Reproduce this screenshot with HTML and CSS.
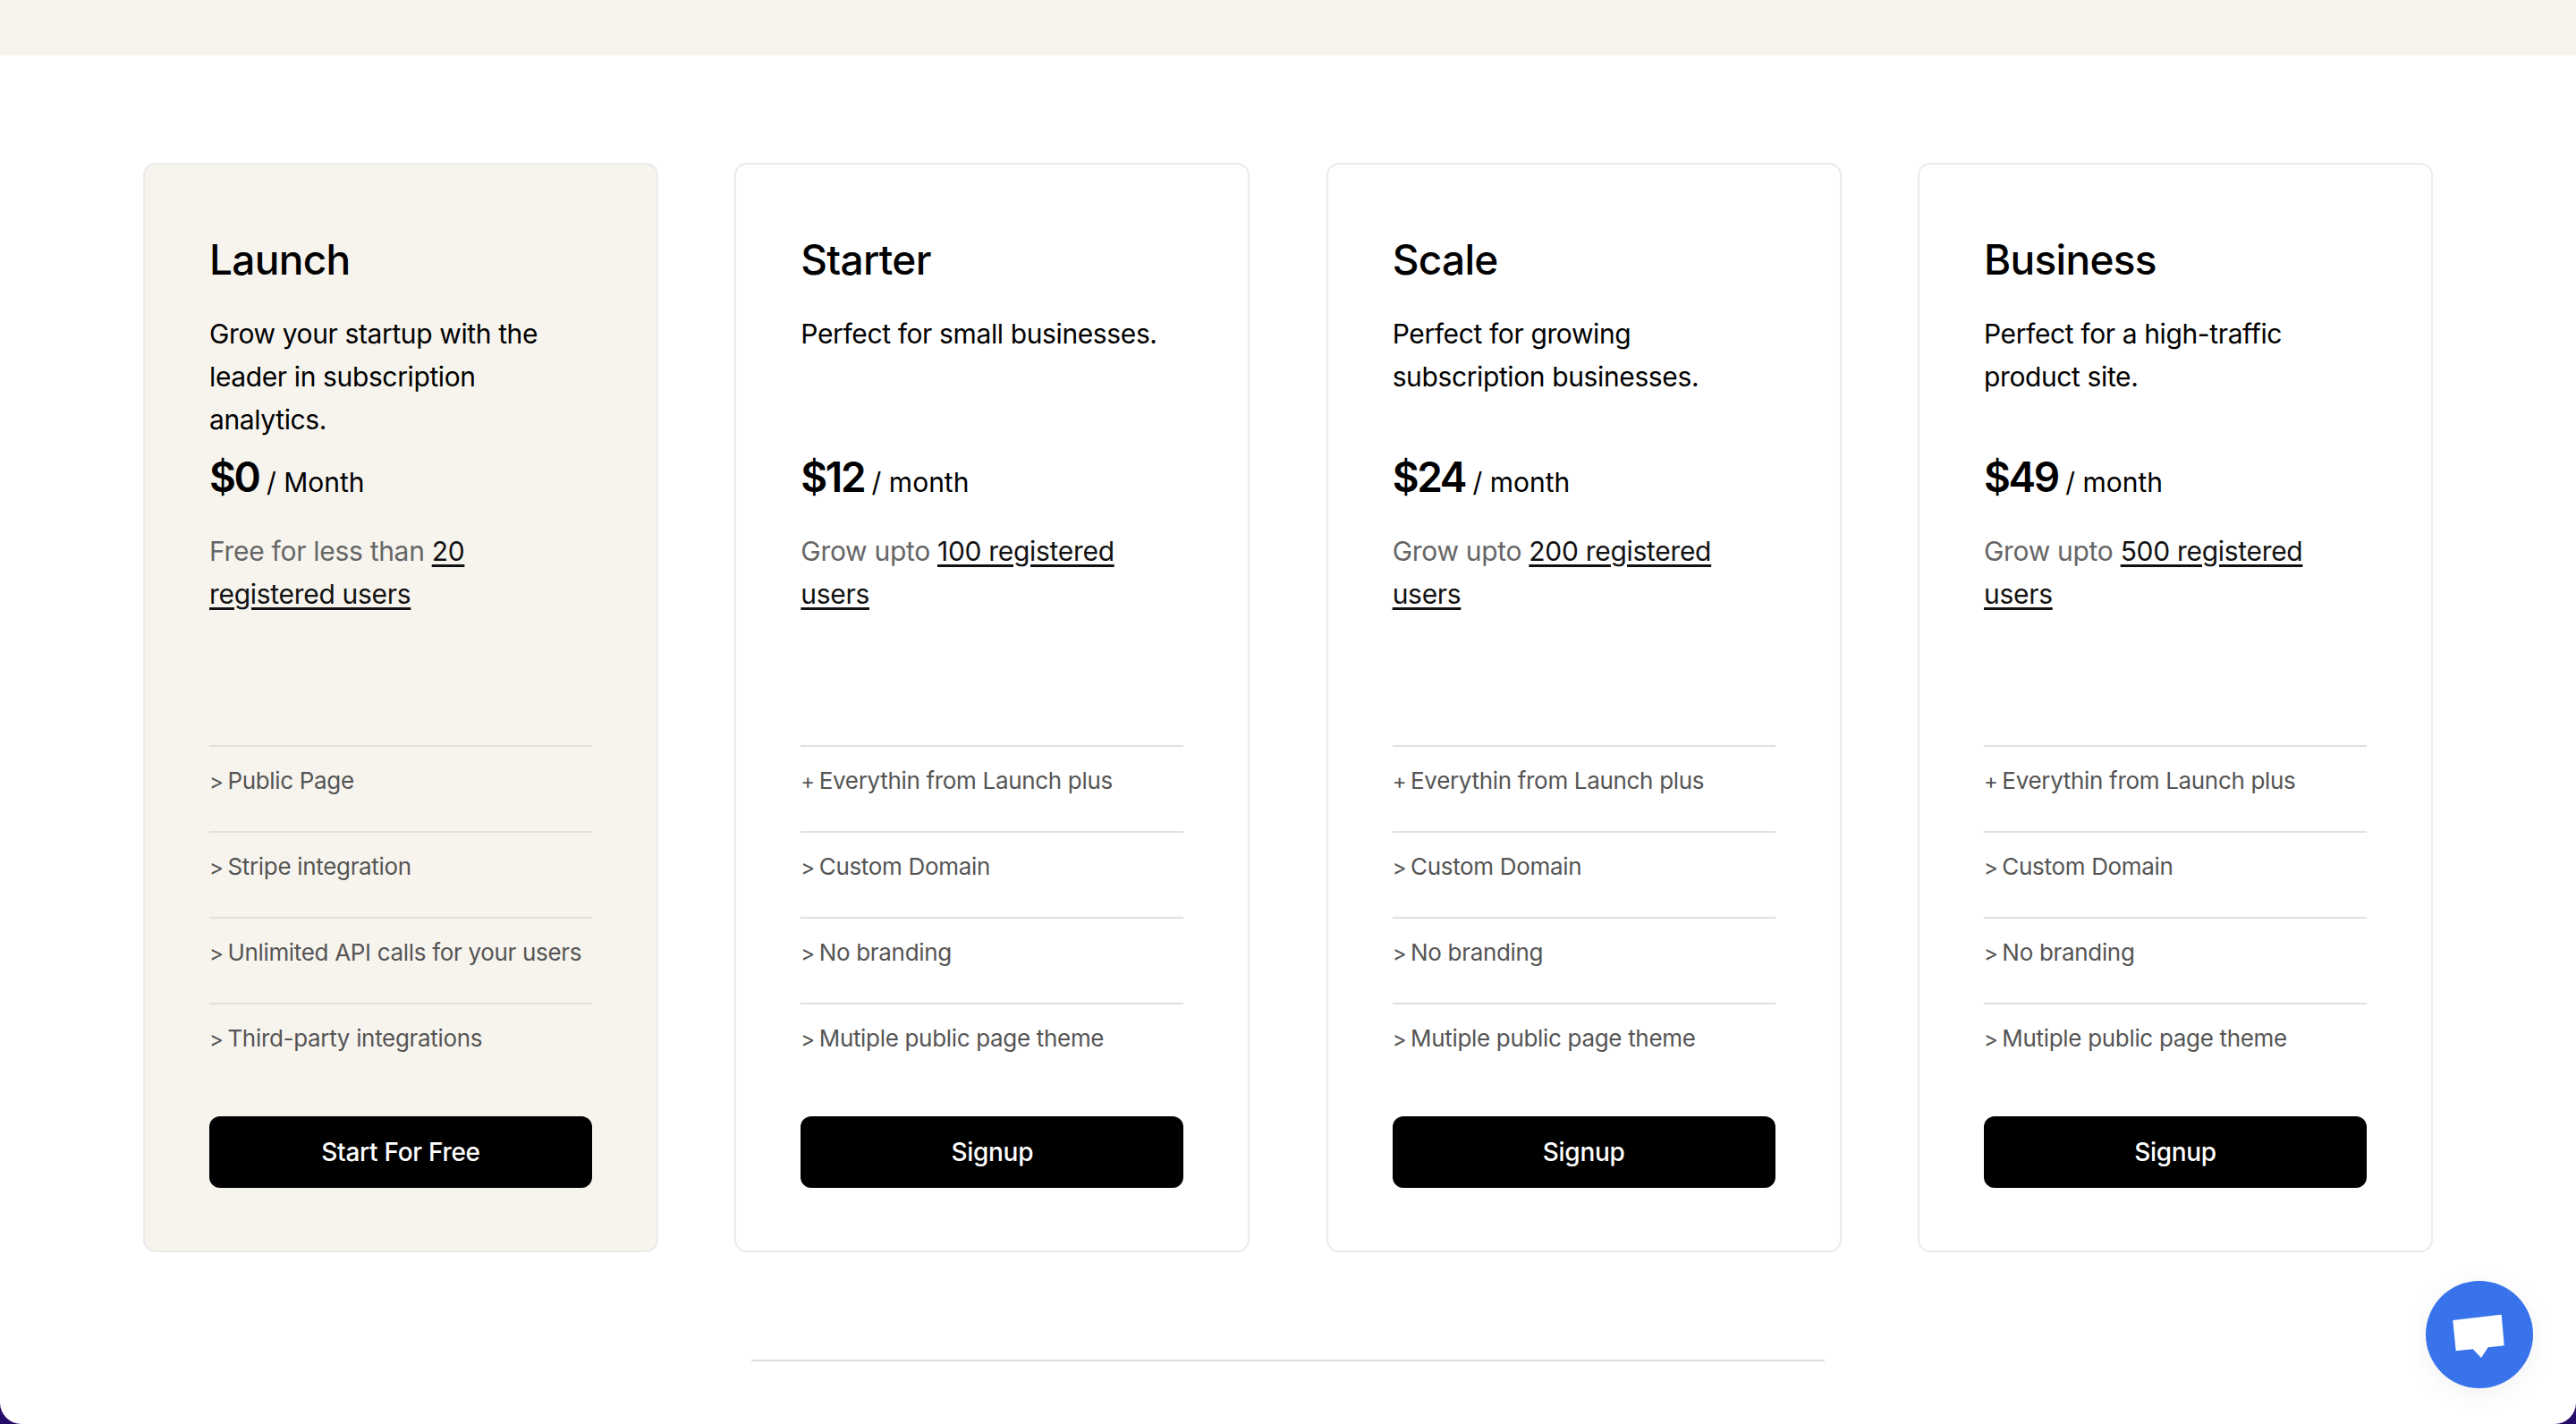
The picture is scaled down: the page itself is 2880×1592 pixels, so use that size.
FILE: index.html
```html
<!DOCTYPE html>
<html lang="en">
<head>
<meta charset="utf-8">
<title>Pricing</title>
<link rel="stylesheet" href="styles.css">
</head>
<body>
<div class="page">
  <div class="band"></div>
  <section class="pricing">
    <article class="card card-free">
      <h2 class="name">Launch</h2>
      <p class="desc">Grow your startup with the leader in subscription analytics.</p>
      <p class="price"><strong>$0</strong> / Month</p>
      <p class="limit">Free for less than <a href="#">20 registered users</a></p>
      <ul class="features">
        <li><span class="mark">&gt;</span> Public Page</li>
        <li><span class="mark">&gt;</span> Stripe integration</li>
        <li><span class="mark">&gt;</span> Unlimited API calls for your users</li>
        <li><span class="mark">&gt;</span> Third-party integrations</li>
      </ul>
      <a class="cta" href="#">Start For Free</a>
    </article>
    <article class="card">
      <h2 class="name">Starter</h2>
      <p class="desc">Perfect for small businesses.</p>
      <p class="price"><strong>$12</strong> / month</p>
      <p class="limit">Grow upto <a href="#">100 registered users</a></p>
      <ul class="features">
        <li><span class="mark">+</span> Everythin from Launch plus</li>
        <li><span class="mark">&gt;</span> Custom Domain</li>
        <li><span class="mark">&gt;</span> No branding</li>
        <li><span class="mark">&gt;</span> Mutiple public page theme</li>
      </ul>
      <a class="cta" href="#">Signup</a>
    </article>
    <article class="card">
      <h2 class="name">Scale</h2>
      <p class="desc">Perfect for growing subscription businesses.</p>
      <p class="price"><strong>$24</strong> / month</p>
      <p class="limit">Grow upto <a href="#">200 registered users</a></p>
      <ul class="features">
        <li><span class="mark">+</span> Everythin from Launch plus</li>
        <li><span class="mark">&gt;</span> Custom Domain</li>
        <li><span class="mark">&gt;</span> No branding</li>
        <li><span class="mark">&gt;</span> Mutiple public page theme</li>
      </ul>
      <a class="cta" href="#">Signup</a>
    </article>
    <article class="card">
      <h2 class="name">Business</h2>
      <p class="desc">Perfect for a high-traffic product site.</p>
      <p class="price"><strong>$49</strong> / month</p>
      <p class="limit">Grow upto <a href="#">500 registered users</a></p>
      <ul class="features">
        <li><span class="mark">+</span> Everythin from Launch plus</li>
        <li><span class="mark">&gt;</span> Custom Domain</li>
        <li><span class="mark">&gt;</span> No branding</li>
        <li><span class="mark">&gt;</span> Mutiple public page theme</li>
      </ul>
      <a class="cta" href="#">Signup</a>
    </article>
  </section>
  <hr class="rule">
  <button class="chat" type="button" aria-label="Open chat">
    <svg viewBox="0 0 120 120" width="120" height="120" aria-hidden="true">
      <polygon points="30.3,44 84.7,37.7 87.7,72.3 69.7,74.3 62,86 52.7,76.3 33.7,78.3" fill="#fff"/>
    </svg>
  </button>
</div>
</body>
</html>
```

FILE: styles.css
```css
* { box-sizing: border-box; }
html, body { margin: 0; padding: 0; }
body {
  height: 1592px;
  overflow: hidden;
  background: #250c66;
  font-family: "Inter", "Liberation Sans", sans-serif;
  color: #000;
}
.page {
  position: relative;
  height: 1592px;
  background: #fff;
  border-radius: 0 0 24px 24px;
  overflow: hidden;
}
.band { height: 62px; background: #f7f4ee; }
.pricing {
  display: flex;
  justify-content: space-between;
  padding: 120px 160px 0;
}
.card {
  width: 576px;
  height: 1218px;
  padding: 74px 72px 0;
  border: 2px solid #ebebeb;
  border-radius: 14px;
  background: #fff;
  display: flex;
  flex-direction: column;
}
.card-free { background: #f7f4ee; }
.name {
  margin: 0 0 27px;
  font-size: 46px;
  line-height: 64px;
  font-weight: 500;
  letter-spacing: -0.7px;
}
.desc {
  margin: 0;
  height: 144px;
  font-size: 30px;
  line-height: 48px;
  letter-spacing: -0.38px;
}
.price {
  margin: 8px 0 0;
  height: 64px;
  font-size: 30px;
  line-height: 64px;
}
.price strong {
  font-size: 46px;
  font-weight: 600;
  letter-spacing: -2.4px;
}
.limit {
  margin: 27px 0 0;
  height: 241px;
  font-size: 30px;
  line-height: 48px;
  letter-spacing: -0.3px;
  color: #666;
}
.limit a {
  color: #111;
  text-decoration: underline;
  text-decoration-thickness: 3px;
  text-underline-offset: 4px;
}
.features { list-style: none; margin: 0; padding: 0; }
.features li {
  height: 96px;
  padding-top: 18px;
  border-top: 2px solid #e2e0da;
  font-size: 26px;
  line-height: 40px;
  letter-spacing: -0.32px;
  color: #555;
}
.mark { letter-spacing: -2.5px; font-size: 24px; }
.cta {
  display: flex;
  align-items: center;
  justify-content: center;
  height: 80px;
  margin-top: 31px;
  border-radius: 12px;
  background: #000;
  color: #fff;
  font-size: 28px;
  font-weight: 500;
  letter-spacing: -0.3px;
  text-decoration: none;
}
.rule {
  width: 1200px;
  height: 2px;
  margin: 120px auto 0;
  border: 0;
  background: #dcdde0;
}
.chat {
  position: absolute;
  left: 2712px;
  top: 1432px;
  width: 120px;
  height: 120px;
  padding: 0;
  border: 0;
  border-radius: 50%;
  background: #3873eb;
  box-shadow: 0 6px 30px rgba(0, 0, 0, 0.06);
}
.chat svg { display: block; }
```
